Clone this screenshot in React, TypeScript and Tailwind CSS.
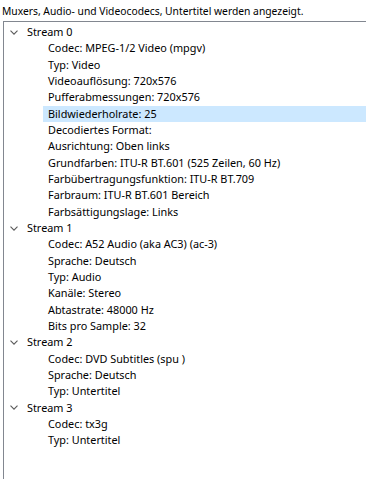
import React from "react";

type Stream = { name: string; items: string[] };

const streams: Stream[] = [
  {
    name: "Stream 0",
    items: [
      "Codec: MPEG-1/2 Video (mpgv)",
      "Typ: Video",
      "Videoauflösung: 720x576",
      "Pufferabmessungen: 720x576",
      "Bildwiederholrate: 25",
      "Decodiertes Format:",
      "Ausrichtung: Oben links",
      "Grundfarben: ITU-R BT.601 (525 Zeilen, 60 Hz)",
      "Farbübertragungsfunktion: ITU-R BT.709",
      "Farbraum: ITU-R BT.601 Bereich",
      "Farbsättigungslage: Links",
    ],
  },
  {
    name: "Stream 1",
    items: [
      "Codec: A52 Audio (aka AC3) (ac-3)",
      "Sprache: Deutsch",
      "Typ: Audio",
      "Kanäle: Stereo",
      "Abtastrate: 48000 Hz",
      "Bits pro Sample: 32",
    ],
  },
  {
    name: "Stream 2",
    items: ["Codec: DVD Subtitles (spu )", "Sprache: Deutsch", "Typ: Untertitel"],
  },
  {
    name: "Stream 3",
    items: ["Codec: tx3g", "Typ: Untertitel"],
  },
];

function Chevron() {
  return (
    <svg width="8" height="5" viewBox="0 0 8 5" className="shrink-0">
      <path d="M0.5 0.6 L4 4.1 L7.5 0.6" fill="none" stroke="#5a5a5a" strokeWidth="1.1" />
    </svg>
  );
}

export default function App() {
  return (
    <div
      className="w-[366px] h-[479px] bg-white text-black text-[10.85px] overflow-hidden flex flex-col"
      style={{ fontFamily: '"Noto Sans", "Open Sans", sans-serif' }}
    >
      <div className="h-[21px] pl-[2px] pt-[2.5px] text-[10.3px] leading-[16px] whitespace-nowrap">
        Muxers, Audio- und Videocodecs, Untertitel werden angezeigt.
      </div>
      <div className="ml-[3px] flex-1 border-l border-t border-[#828790] pt-[2px] flex flex-col">
        {streams.map((s) => (
          <div key={s.name} className="flex flex-col">
            <div className="h-[16.333px] flex items-center whitespace-nowrap">
              <div className="w-[23px] flex justify-start pl-[6px]">
                <Chevron />
              </div>
              <span>{s.name}</span>
            </div>
            {s.items.map((it) => {
              const sel = it === "Bildwiederholrate: 25";
              return (
                <div key={it} className="h-[16.333px] flex items-center whitespace-nowrap pl-[39px]">
                  <div
                    className={
                      "flex-1 h-full flex items-center pl-[5px] " + (sel ? "bg-[#cce8ff]" : "")
                    }
                  >
                    {it}
                  </div>
                </div>
              );
            })}
          </div>
        ))}
      </div>
    </div>
  );
}
